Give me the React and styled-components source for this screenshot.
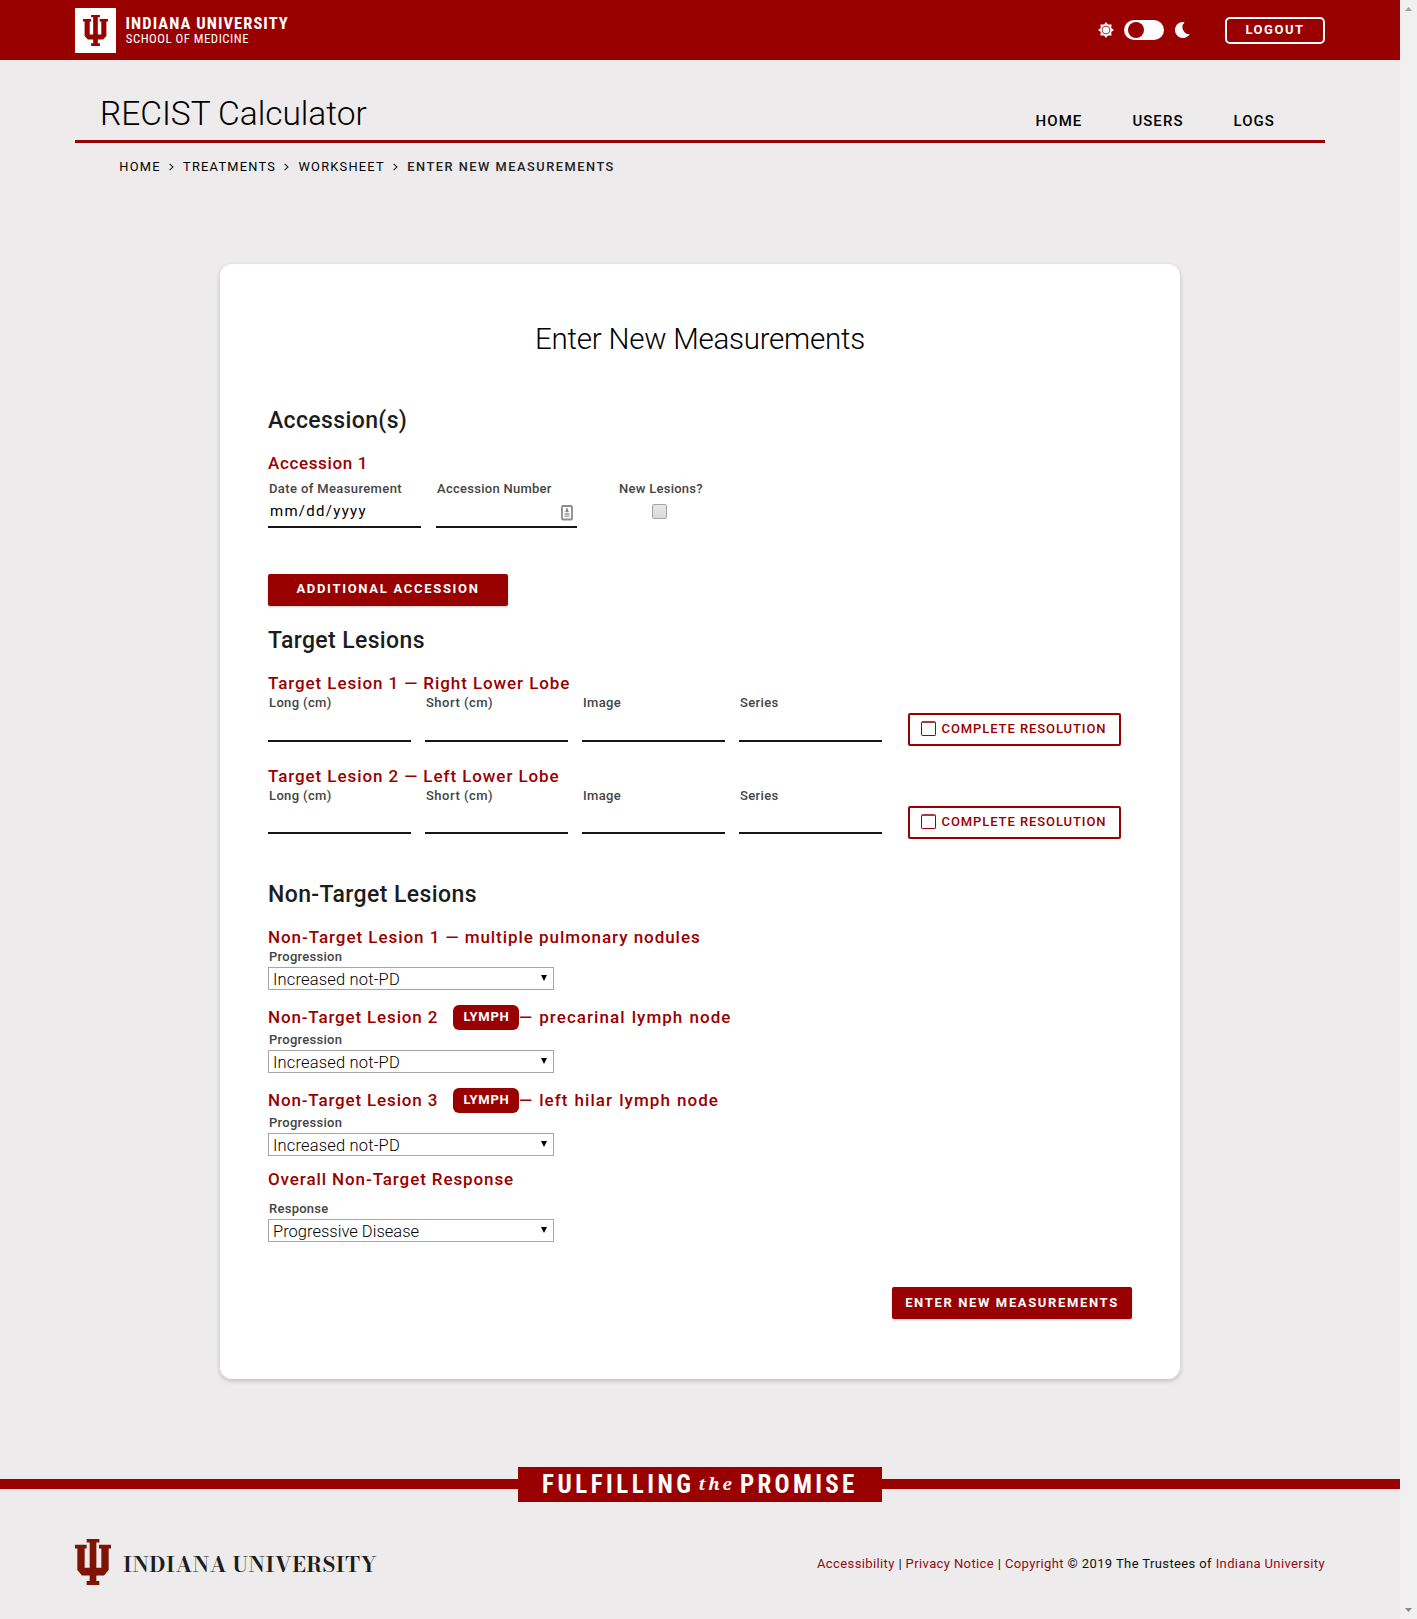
import React from 'react';
import styled, { createGlobalStyle } from 'styled-components';

const crimson = '#990000';
const sans = 'Roboto, "Liberation Sans", sans-serif';

const GlobalStyle = createGlobalStyle`
  *, *::before, *::after { box-sizing: border-box; }
  body { margin: 0; background: #edebeb; font-family: ${sans}; color: #000; }
  h1, h2, h3, p { margin: 0; font-weight: inherit; }
  a { color: inherit; text-decoration: none; }
  button, input { font: inherit; }
`;

const Window = styled.div`
  display: flex;
  height: 1619px;
  overflow: hidden;
  white-space: nowrap;
`;

const Page = styled.div`
  flex: 1;
  min-width: 0;
`;

const Scrollbar = styled.div`
  width: 17px;
  display: flex;
  flex-direction: column;
  justify-content: space-between;
  align-items: center;
  padding: 7px 0;
  background: #f0f0f0;
`;

const Container = styled.div`
  width: 1250px;
  margin: 0 auto;
  display: flex;
`;

/* brand bar */

const BrandBar = styled.header`
  height: 60px;
  background: ${crimson};
  color: #fff;
`;

const BrandBox = styled.div`
  width: 41px;
  height: 45px;
  margin-top: 8px;
  display: flex;
  justify-content: center;
  padding-top: 7px;
  background: #fff;
`;

const BrandText = styled.div`
  flex: 1;
  padding: 14px 0 0 9.6px;
  font-stretch: condensed;
`;

const BrandName = styled.div`
  font-size: 16.5px;
  font-weight: 700;
  line-height: 19px;
  letter-spacing: 1.06px;
`;

const BrandUnit = styled.div`
  font-size: 12.8px;
  line-height: 12px;
  letter-spacing: 0.5px;
  padding-left: 0.2px;
`;

const ThemeSwitch = styled.div`
  display: flex;
  align-items: center;
  gap: 10px;
  height: 60px;
  margin-right: 35px;
`;

const Toggle = styled.div`
  width: 40px;
  height: 20px;
  padding: 2px 3.5px;
  border-radius: 10px;
  background: #fff;

  &::before {
    content: '';
    display: block;
    width: 16px;
    height: 16px;
    border-radius: 50%;
    background: ${crimson};
  }
`;

const Logout = styled.button`
  width: 100px;
  height: 27px;
  margin-top: 17px;
  padding: 0 0 2px;
  border: 2px solid #fff;
  border-radius: 5px;
  background: none;
  color: #fff;
  font-size: 13px;
  font-weight: 700;
  line-height: 21px;
  letter-spacing: 1.5px;
`;

/* application bar */

const AppBar = styled(Container)`
  justify-content: space-between;
  height: 83px;
  padding: 0 50px 0 25px;
  border-bottom: 3px solid ${crimson};
`;

const AppName = styled.h1`
  padding-top: 32px;
  font-size: 33.5px;
  font-weight: 300;
  line-height: 44px;
  letter-spacing: -0.04px;
`;

const Nav = styled.nav`
  display: flex;
  gap: 50px;
  padding-top: 51px;
  font-size: 15px;
  font-weight: 500;
  line-height: 20px;
  letter-spacing: 1.05px;
`;

const Crumbs = styled(Container)`
  align-items: center;
  padding: 15px 0 0 44.3px;
  font-size: 12.8px;
  line-height: 18px;
  letter-spacing: 1.25px;
`;

const CurrentCrumb = styled.span`
  font-weight: 500;
  letter-spacing: 1.52px;
  color: #222;
`;

const ChevronSvg = styled.svg`
  margin: 0 9.4px 1px 8px;
`;

/* form card */

const Card = styled.main`
  width: 960px;
  height: 1115px;
  margin: 88px auto 0;
  padding: 55px 48px 60px;
  border-radius: 12px;
  background: #fff;
  box-shadow: 0 2px 5px rgba(0, 0, 0, 0.2);
`;

const FormTitle = styled.h1`
  text-align: center;
  font-size: 29.5px;
  font-weight: 300;
  line-height: 40px;
  letter-spacing: -0.24px;
`;

const SectionTitle = styled.h2`
  margin: ${(p) => p.$top}px 0 17px;
  padding-top: 1px;
  font-size: 23px;
  font-weight: 500;
  line-height: 30px;
  height: 30px;
  letter-spacing: ${(p) => p.$ls || 0.37}px;
  color: #1c1c1c;
`;

const GroupTitle = styled.h3`
  display: flex;
  align-items: flex-start;
  height: ${(p) => p.$height || 22}px;
  margin-bottom: ${(p) => p.$gap || 1}px;
  font-size: 17px;
  font-weight: 500;
  line-height: 22px;
  letter-spacing: ${(p) => p.$ls || 0.92}px;
  color: ${crimson};
`;

const TitleStart = styled.span`
  width: 185px;
  padding-top: 1px;
  letter-spacing: 0.84px;
`;

const TitleEnd = styled.span`
  padding-top: 1px;
  letter-spacing: 1.05px;
  word-spacing: 0.8px;
`;

const Badge = styled.span`
  width: 66px;
  height: 25px;
  padding-left: 1px;
  border-radius: 6px;
  background: ${crimson};
  color: #fff;
  font-size: 13px;
  font-weight: 700;
  line-height: 23px;
  letter-spacing: 0.75px;
  text-align: center;
`;

const Label = styled.label`
  display: block;
  padding-left: 1px;
  font-size: 13px;
  font-weight: 500;
  line-height: 16px;
  letter-spacing: ${(p) => p.$ls || 0.27}px;
  color: #444;
`;

const AccessionRow = styled.div`
  display: grid;
  grid-template-columns: 153px 141px 84px;
  column-gap: 15px;
`;

const NewLesions = styled.div`
  margin-left: 26px;
  width: 84px;
`;

const TargetRow = styled.div`
  display: grid;
  grid-template-columns: repeat(4, 143px) 213px;
  column-gap: 14px;
  height: 51px;
  margin-bottom: ${(p) => (p.$last ? 0 : 19)}px;
`;

const FieldBox = styled.div`
  display: flex;
  justify-content: space-between;
  height: ${(p) => p.$height || 31}px;
  padding: 3px 4px 0 2px;
  border-bottom: 2px solid #161616;
  font-size: 15px;
  line-height: 22px;
  letter-spacing: 1.28px;
`;

const ContactIcon = styled.svg`
  margin: 5px 0 0 auto;
`;

const GreyCheckbox = styled.div`
  width: 15px;
  height: 15px;
  margin: 7px auto 0 34px;
  border: 1px solid #a4a4a4;
  border-radius: 2px;
  background: linear-gradient(#e6e6e6, #dadada);
`;

const Button = styled.button`
  display: block;
  width: 240px;
  height: 32px;
  margin: ${(p) => p.$top}px 0 0 ${(p) => (p.$right ? 'auto' : '0')};
  padding: 0 0 ${(p) => (p.$right ? 1 : 3)}px;
  border: 0;
  border-radius: 2px;
  background: ${crimson};
  color: #fff;
  box-shadow: 0 1px 2px rgba(0, 0, 0, 0.2);
  font-size: 13px;
  font-weight: 700;
  letter-spacing: ${(p) => p.$ls}px;
  line-height: 29px;
`;

const ResolutionButton = styled.div`
  display: flex;
  align-items: flex-start;
  height: 33px;
  margin: 18px -12px 0 12px;
  padding: 6px 0 0 11px;
  gap: 5.5px;
  border: 2px solid ${crimson};
  border-radius: 2px;
  color: ${crimson};
  font-size: 13px;
  font-weight: 500;
  line-height: 15px;
  letter-spacing: 0.92px;
`;

const OutlineCheckbox = styled.span`
  width: 15px;
  height: 15px;
  border: 1px solid ${crimson};
  border-top: 2px solid #a53c3c;
  border-radius: 2px;
`;

const SelectBox = styled.div`
  display: flex;
  justify-content: space-between;
  align-items: flex-start;
  width: 286px;
  height: 23px;
  margin: 2px 0 ${(p) => p.$bottom}px;
  padding: 0 6px 0 4px;
  border: 1px solid #a6a6a6;
  font-size: 16.5px;
  font-weight: 300;
  line-height: 23px;
  letter-spacing: ${(p) => p.$ls}px;
`;

const SelectArrow = styled.span`
  width: 0;
  margin-top: 7px;
  border: 3.5px solid transparent;
  border-top: 6px solid #000;
  border-bottom: 0;
`;

/* footer */

const PromiseBand = styled.div`
  display: flex;
  align-items: flex-start;
  margin-top: 88px;

  &::before,
  &::after {
    content: '';
    flex: 1;
    height: 10px;
    margin-top: 12px;
    background: ${crimson};
  }
`;

const PromiseBox = styled.div`
  display: flex;
  width: 364px;
  height: 35px;
  padding-left: 24px;
  background: ${crimson};
  color: #fff;
  font-size: 25px;
  font-weight: 700;
  font-stretch: condensed;
  line-height: 35px;
`;

const PromiseWord = styled.span`
  letter-spacing: ${(p) => p.$ls}px;
`;

const PromiseThe = styled.em`
  width: 45.5px;
  padding-left: 4px;
  font-family: "Noto Serif", "Liberation Serif", serif;
  font-size: 17px;
  font-stretch: normal;
  letter-spacing: 2.9px;
  line-height: 33px;
`;

const FooterRow = styled(Container)`
  justify-content: space-between;
  padding-top: 37px;
`;

const FooterBrand = styled.div`
  display: flex;
  gap: 12px;
`;

const Wordmark = styled.span`
  padding-top: 9px;
  font-family: "Bodoni Moda", "Liberation Serif", serif;
  font-size: 21px;
  font-weight: 700;
  line-height: 32px;
  letter-spacing: 0.45px;
  color: #1f1c1c;
`;

const Legal = styled.p`
  padding-top: 16px;
  font-size: 13px;
  line-height: 18px;
  letter-spacing: 0.39px;
  color: #111;
`;

const LegalLink = styled.a`
  && { color: #900a14; }
`;

const Trident = ({ width, height, color }) => (
  <svg width={width} height={height} viewBox="0 0 108 136" preserveAspectRatio="none" fill={color}>
    <path d="M35 0H73V10H64V85H79V28H72V17H108V28H101V92L87 108H64V124H73V136H35V124H44V108H21L7 92V28H0V17H35V28H29V85H44V10H35Z" />
  </svg>
);

const Sun = () => (
  <svg width="16" height="16" viewBox="0 0 16 16" fill="#fff">
    <path d="M8 0L9.9 2.6L13.6 2.4L13.2 6L16 8L13.2 10L13.6 13.6L9.9 13.4L8 16L6.1 13.4L2.4 13.6L2.8 10L0 8L2.8 6L2.4 2.4L6.1 2.6Z" />
    <circle cx="8" cy="8" r="3.9" fill="none" stroke={crimson} strokeWidth="0.8" />
  </svg>
);

const Moon = () => (
  <svg width="16" height="16" viewBox="0 0 16 16" fill="#fff">
    <path d="M10.6 0.2A8 8 0 1 0 15.8 12.2A7 7 0 0 1 10.6 0.2Z" />
  </svg>
);

const Chevron = () => (
  <ChevronSvg width="5" height="8" viewBox="0 0 5 8" fill="none" stroke="#222" strokeWidth="1.1">
    <path d="M0.6 0.8L4 4L0.6 7.2" />
  </ChevronSvg>
);

const Field = ({ label, ls, height, children }) => (
  <div>
    <Label $ls={ls}>{label}</Label>
    <FieldBox $height={height}>{children}</FieldBox>
  </div>
);

const Select = ({ label, value, bottom = 0, ls = 0.17 }) => (
  <>
    <Label>{label}</Label>
    <SelectBox $bottom={bottom} $ls={ls}>
      {value}
      <SelectArrow />
    </SelectBox>
  </>
);

const targets = [
  { title: 'Target Lesion 1 — Right Lower Lobe', fieldHeight: 31 },
  { title: 'Target Lesion 2 — Left Lower Lobe', fieldHeight: 30 },
];

const lymphNodes = [
  { title: 'Non-Target Lesion 2', site: '— precarinal lymph node', bottom: 15 },
  { title: 'Non-Target Lesion 3', site: '— left hilar lymph node', bottom: 12 },
];

export default function App() {
  return (
    <>
      <GlobalStyle />
      <Window>
        <Page>
          <BrandBar>
            <Container>
              <BrandBox>
                <Trident width={25} height={31} color={crimson} />
              </BrandBox>
              <BrandText>
                <BrandName>INDIANA UNIVERSITY</BrandName>
                <BrandUnit>SCHOOL OF MEDICINE</BrandUnit>
              </BrandText>
              <ThemeSwitch>
                <Sun />
                <Toggle />
                <Moon />
              </ThemeSwitch>
              <Logout>LOGOUT</Logout>
            </Container>
          </BrandBar>

          <AppBar>
            <AppName>RECIST Calculator</AppName>
            <Nav>
              <a>HOME</a>
              <a>USERS</a>
              <a>LOGS</a>
            </Nav>
          </AppBar>
          <Crumbs>
            <a>HOME</a>
            <Chevron />
            <a>TREATMENTS</a>
            <Chevron />
            <a>WORKSHEET</a>
            <Chevron />
            <CurrentCrumb>ENTER NEW MEASUREMENTS</CurrentCrumb>
          </Crumbs>

          <Card>
            <FormTitle>Enter New Measurements</FormTitle>

            <SectionTitle $top={46}>Accession(s)</SectionTitle>
            <GroupTitle $gap={7} $ls={0.65}>Accession 1</GroupTitle>
            <AccessionRow>
              <Field label="Date of Measurement" ls={0.38}>mm/dd/yyyy</Field>
              <Field label="Accession Number">
                <ContactIcon width="12" height="16" viewBox="0 0 12 16">
                  <rect x="1" y="1" width="10" height="13.5" rx="1" fill="#fff" stroke="#8c8c8c" strokeWidth="1.8" />
                  <path d="M6 3.2L7.4 6.8H4.6Z" fill="#777" stroke="#777" strokeWidth="0.6" />
                  <path d="M3.6 9H8.4M3.6 11.2H8.4" stroke="#999" strokeWidth="1.3" />
                </ContactIcon>
              </Field>
              <NewLesions>
                <Label>New Lesions?</Label>
                <GreyCheckbox />
              </NewLesions>
            </AccessionRow>
            <Button $top={46} $ls={1.7}>ADDITIONAL ACCESSION</Button>

            <SectionTitle $top={19}>Target Lesions</SectionTitle>
            {targets.map((t, i) => (
              <React.Fragment key={t.title}>
                <GroupTitle>{t.title}</GroupTitle>
                <TargetRow $last={i === targets.length - 1}>
                  <Field label="Long (cm)" ls={0.36} height={t.fieldHeight} />
                  <Field label="Short (cm)" ls={0.5} height={t.fieldHeight} />
                  <Field label="Image" ls={0.35} height={t.fieldHeight} />
                  <Field label="Series" ls={0.35} height={t.fieldHeight} />
                  <ResolutionButton>
                    <OutlineCheckbox />
                    COMPLETE RESOLUTION
                  </ResolutionButton>
                </TargetRow>
              </React.Fragment>
            ))}

            <SectionTitle $top={40} $ls={0.4}>Non-Target Lesions</SectionTitle>
            <GroupTitle $ls={0.95}>Non-Target Lesion 1 — multiple pulmonary nodules</GroupTitle>
            <Select label="Progression" value="Increased not-PD" bottom={15} />
            {lymphNodes.map((n) => (
              <React.Fragment key={n.title}>
                <GroupTitle $height={25} $gap={2}>
                  <TitleStart>{n.title}</TitleStart>
                  <Badge>LYMPH</Badge>
                  <TitleEnd>{n.site}</TitleEnd>
                </GroupTitle>
                <Select label="Progression" value="Increased not-PD" bottom={n.bottom} />
              </React.Fragment>
            ))}
            <GroupTitle $gap={11} $ls={0.9}>Overall Non-Target Response</GroupTitle>
            <Select label="Response" value="Progressive Disease" ls={0.01} />

            <Button $top={45} $ls={1.64} $right>ENTER NEW MEASUREMENTS</Button>
          </Card>

          <PromiseBand>
            <PromiseBox>
              <PromiseWord $ls={3.5}>FULFILLING</PromiseWord>
              <PromiseThe>the</PromiseThe>
              <PromiseWord $ls={3.3}>PROMISE</PromiseWord>
            </PromiseBox>
          </PromiseBand>

          <FooterRow>
            <FooterBrand>
              <Trident width={36} height={46} color="#7d1405" />
              <Wordmark>INDIANA UNIVERSITY</Wordmark>
            </FooterBrand>
            <Legal>
              <LegalLink>Accessibility</LegalLink> | <LegalLink>Privacy Notice</LegalLink> |{' '}
              <LegalLink>Copyright</LegalLink> © 2019 The Trustees of <LegalLink>Indiana University</LegalLink>
            </Legal>
          </FooterRow>
        </Page>
        <Scrollbar>
          <svg width="7" height="4" viewBox="0 0 7 4" fill="#a3a3a3"><path d="M0 4L3.5 0L7 4Z" /></svg>
          <svg width="7" height="4" viewBox="0 0 7 4" fill="#8a8a8a"><path d="M0 0L3.5 4L7 0Z" /></svg>
        </Scrollbar>
      </Window>
    </>
  );
}
